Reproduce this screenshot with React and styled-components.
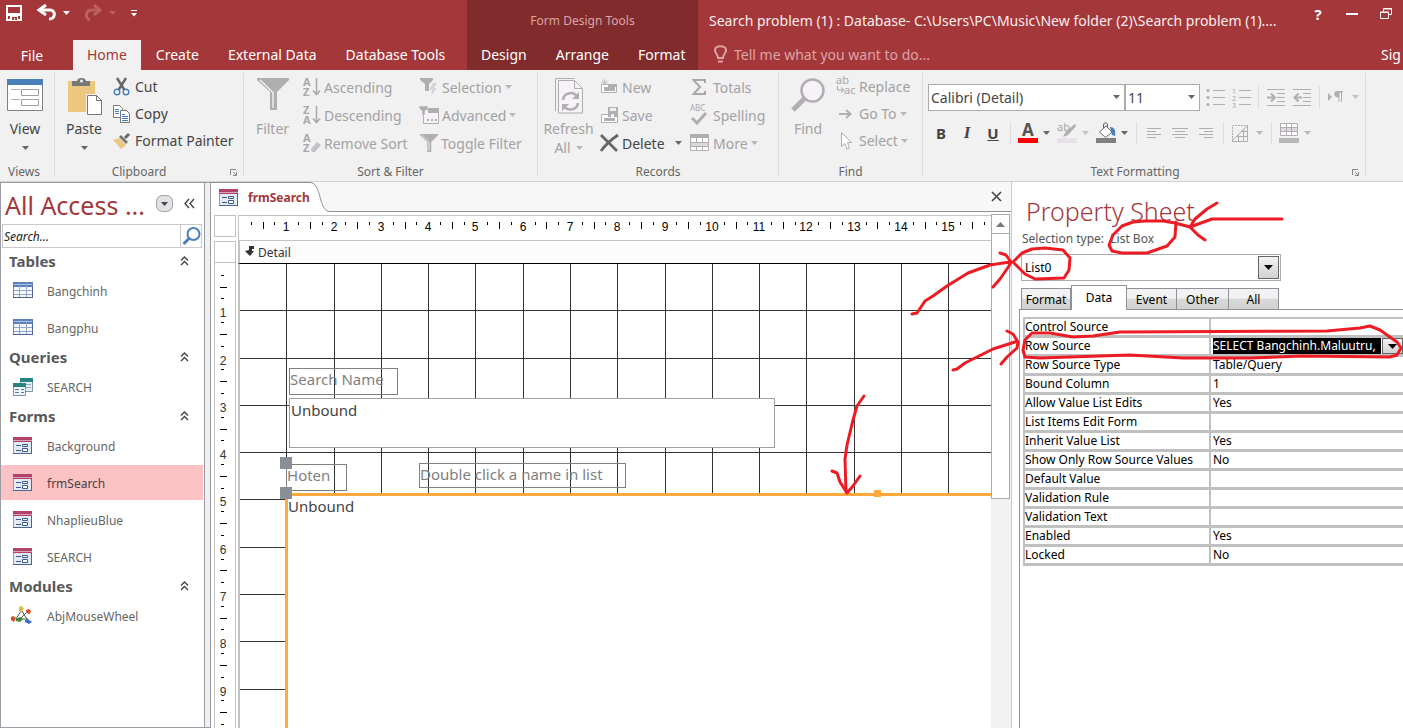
import React from 'react';
import styled, { createGlobalStyle, css } from 'styled-components';

const GlobalStyle = createGlobalStyle`
  * {
    box-sizing: border-box;
  }

  body {
    margin: 0;
    overflow: hidden;
    background: #fff;
    font-family: 'Noto Sans', 'Open Sans', sans-serif;
    font-size: 14px;
  }

  button,
  input,
  select {
    font: inherit;
    color: inherit;
    margin: 0;
    padding: 0;
    border: 0;
    border-radius: 0;
    background: none;
    outline: none;
  }

  h1,
  h2,
  ul {
    margin: 0;
    padding: 0;
    font-weight: normal;
    list-style: none;
  }
`;

const App = styled.div`
  position: relative;
  min-height: 100vh;
  display: flex;
  flex-direction: column;
  overflow: hidden;
`;

const Icon = styled.svg`
  display: block;
  flex: none;
  overflow: visible;
`;

/* ---------- title bar ---------- */

const Header = styled.header`
  display: flex;
  height: 70px;
  background: #a4373a;
  color: #fff;
`;

const HeaderPart = styled.div`
  display: flex;
  flex-direction: column;
  flex: ${(props) => (props.$grow ? '1 1 0' : `0 0 ${props.$width}px`)};
  min-width: 0;
  background: ${(props) => props.$background || 'transparent'};
`;

const TopRow = styled.div`
  display: flex;
  align-items: center;
  height: 40px;
  padding: ${(props) => props.$padding || 0};
`;

const QuickAccess = styled(TopRow)`
  height: 26px;
  margin-bottom: 14px;
  padding-left: 6px;
  gap: 15px;
`;

const QuickButton = styled.button`
  display: flex;
  align-items: center;
  gap: 6px;
`;

const ContextTitle = styled.div`
  width: 100%;
  text-align: center;
  font-size: 12px;
  color: #d9a5a7;
`;

const WindowTitle = styled.h1`
  flex: 1;
  font-size: 14px;
  white-space: nowrap;
  overflow: hidden;
  color: #fbeeee;
`;

const WindowButton = styled.button`
  display: flex;
  justify-content: center;
  align-items: center;
  width: 34px;
  height: 28px;
  margin-bottom: 12px;
`;

const Tabs = styled.nav`
  display: flex;
  height: 30px;
  gap: 1px;
`;

const Tab = styled.button`
  padding: 0 14px 2px;
  white-space: nowrap;
  background: ${(props) => (props.$active ? '#f1f1f1' : 'transparent')};
  color: ${(props) => (props.$active ? '#a4373a' : '#fff')};
`;

const FileTab = styled(Tab)`
  width: 64px;
  margin-right: 8px;
  padding: 0;
`;

const TellMe = styled.label`
  display: flex;
  align-items: center;
  flex: 1;
  gap: 7px;
  padding: 0 0 2px 16px;
`;

const TellMeInput = styled.input`
  flex: 1;

  &::placeholder {
    color: #dba4a6;
    opacity: 1;
  }
`;

const SignIn = styled.button`
  width: 22px;
  padding-bottom: 2px;
  text-align: left;
`;

/* ---------- ribbon ---------- */

const Ribbon = styled.div`
  display: flex;
  height: 112px;
  padding: 3px 0 5px;
  background: #f1f1f1;
  border-bottom: 1px solid #d2d2d2;
  color: #444;
`;

const Group = styled.section`
  display: flex;
  flex-direction: column;
  flex: 0 0 ${(props) => props.$width}px;
  border-right: 1px solid #dcdcdc;
`;

const GroupBody = styled.div`
  display: flex;
  flex: 1;
  padding-left: ${(props) => props.$left || 0}px;
`;

const GroupLabel = styled.div`
  position: relative;
  height: 18px;
  line-height: 18px;
  margin-bottom: -5px;
  padding-right: ${(props) => props.$right || 0}px;
  text-align: center;
  font-size: 12px;
  color: #666;
`;

const Launcher = styled.button`
  position: absolute;
  right: 6px;
  top: 6px;
`;

const BigButton = styled.button`
  display: flex;
  flex-direction: column;
  align-items: center;
  width: ${(props) => props.$width}px;
  padding-top: 5px;
  line-height: 20px;
  color: ${(props) => (props.$off ? '#a3a1a3' : '#444')};
`;

const BigIcon = styled.span`
  display: flex;
  height: 41px;
`;

const BigCaption = styled.span`
  display: flex;
  align-items: center;
  gap: 5px;
  height: 18px;
`;

const Column = styled.div`
  display: flex;
  flex-direction: column;
  align-items: flex-start;
  width: ${(props) => props.$width}px;
  padding-left: ${(props) => props.$left || 0}px;
`;

const SmallButton = styled.button`
  display: flex;
  align-items: center;
  gap: 3px;
  height: ${(props) => props.$height || 28}px;
  white-space: nowrap;
  color: ${(props) => (props.$off ? '#a3a1a3' : '#444')};
`;

const SplitName = styled.span`
  padding-right: 7px;
`;

const FormatArea = styled.div`
  display: flex;
  flex-direction: column;
  gap: 10px;
  padding: 11px 0 0 5px;
`;

const FormatRow = styled.div`
  display: flex;
  align-items: center;
  height: 26px;
`;

const FormatButton = styled.button`
  display: flex;
  align-items: center;
  gap: 5px;
  justify-content: ${(props) => (props.$menu ? 'flex-start' : 'center')};
  width: ${(props) => (props.$menu ? 39 : 26)}px;
  height: 26px;
  padding-left: ${(props) => (props.$menu ? 3 : 0)}px;
`;

const Letter = styled.span`
  font-weight: bold;
  font-size: 15px;
  ${(props) => props.$italic && css`
    font-style: italic;
    font-family: 'Liberation Serif', serif;
    font-size: 17px;
  `}
  ${(props) => props.$underline && css`
    text-decoration: underline;
  `}
`;

const Divider = styled.span`
  width: 1px;
  height: 22px;
  margin: 0 4px;
  background: #dcdcdc;
`;

const Combo = styled.div`
  display: flex;
  align-items: center;
  width: ${(props) => props.$width}px;
  height: 27px;
  padding: 0 4px 0 2px;
  margin-right: ${(props) => props.$after || 0}px;
  background: #fff;
  border: 1px solid #ababab;
`;

const Select = styled.select`
  appearance: none;
  flex: 1;
  min-width: 0;
`;

/* ---------- navigation pane ---------- */

const Workspace = styled.main`
  display: flex;
  flex: 1;
  min-height: 0;
`;

const NavPane = styled.aside`
  flex: 0 0 211px;
  border-right: 6px solid #f0f0f3;
  outline: 1px solid #9a9da6;
  outline-offset: -1px;
  color: #595959;
`;

const NavInner = styled.div`
  height: 100%;
  border-right: 1px solid #9a9da6;
  padding: 1px 1px 0 1px;
`;

const NavTitle = styled.div`
  display: flex;
  align-items: center;
  height: 41px;
  padding: 2px 8px 0 4px;
`;

const NavHeading = styled.h2`
  flex: 1;
  font-size: 25px;
  line-height: 40px;
  white-space: nowrap;
  color: #a4373a;
`;

const NavTitleButton = styled.button`
  margin-left: 11px;
  padding-bottom: 3px;
`;

const SearchBox = styled.div`
  display: flex;
  height: 24px;
  margin: 0 1px 3px;
  border: 1px solid #c9c9c9;
`;

const SearchInput = styled.input`
  flex: 1;
  min-width: 0;
  padding-left: 1px;
  font-size: 12px;
  font-style: italic;

  &::placeholder {
    color: #222;
    opacity: 1;
  }
`;

const SearchButton = styled.button`
  width: 21px;
  padding-left: 1px;
  border-left: 1px solid #c9c9c9;
`;

const NavGroup = styled.button`
  display: flex;
  align-items: center;
  justify-content: space-between;
  width: 100%;
  height: 22px;
  padding: 0 14px 2px 8px;
  font-size: 15px;
  font-weight: bold;
`;

const NavItem = styled.a`
  display: flex;
  align-items: center;
  gap: 13px;
  height: 35px;
  margin-bottom: 2px;
  padding: 1px 0 0 11px;
  font-size: 12px;
  text-decoration: none;
  color: ${(props) => (props.$selected ? '#444' : '#666')};
  background: ${(props) => (props.$selected ? '#fdc2c4' : 'transparent')};
`;

/* ---------- form designer ---------- */

const Document = styled.section`
  display: flex;
  flex-direction: column;
  flex: 1;
  min-width: 0;
  border-right: 1px solid #ccc;
`;

const DocTabs = styled.div`
  display: flex;
  justify-content: space-between;
  height: 30px;
  padding-right: 9px;
  background: #f7f7f7;
  border-bottom: 1px solid #8e9197;
`;

const DocTab = styled.button`
  display: flex;
  align-items: center;
  height: 30px;
  font-size: 12px;
  font-weight: bold;
  color: #a4373a;
`;

const DocTabFace = styled.span`
  display: flex;
  align-items: center;
  gap: 8px;
  height: 30px;
  padding-left: 7px;
  background: #fff;
  border-top: 1px solid #8e9197;
`;

const Designer = styled.div`
  display: flex;
  flex: 1;
  min-height: 0;
  padding-top: 2px;
`;

const DesignGrid = styled.div`
  display: grid;
  grid-template-columns: 22px 1fr;
  grid-template-rows: 26px 22px 1fr;
  flex: 1;
  min-width: 0;
  padding: 1px 0 0 3px;
  column-gap: 2px;
`;

const Corner = styled.button`
  height: 22px;
  border: 1px solid #c3c3c3;
`;

const TopRuler = styled.div`
  display: flex;
  overflow: hidden;
  border: solid #c3c3c3;
  border-width: 1px 0 1px 1px;
`;

const SectionMark = styled.button`
  border: 1px solid #c3c3c3;
`;

const SectionBar = styled.div`
  display: flex;
  align-items: center;
  gap: 3px;
  padding-left: 5px;
  font-size: 12px;
  color: #333;
  background: #fcfcfc;
  border-left: 2px solid #c3c3c3;
`;

const SideRuler = styled.div`
  display: flex;
  flex-direction: column;
  overflow: hidden;
  border: solid #c3c3c3;
  border-width: 0 1px;
`;

const RulerScale = styled.svg`
  display: block;
  flex: 1 1 0;
  min-width: 0;
  min-height: 0;
  font-family: 'Liberation Sans', Arial, sans-serif;
  font-size: 12px;
`;

const Canvas = styled.div`
  position: relative;
  overflow: hidden;
  border-left: 2px solid #c3c3c3;
  border-top: 1px solid #000;
`;

const GridLines = styled.svg`
  position: absolute;
  width: 100%;
  height: 100%;
`;

const FormControl = styled.div`
  position: absolute;
  left: ${(props) => props.$x}px;
  top: ${(props) => props.$y}px;
  width: ${(props) => props.$width}px;
  height: ${(props) => props.$height}px;
  padding-left: ${(props) => (props.$box ? 1 : 0)}px;
  border: 1px solid ${(props) => (props.$box ? '#a0a0a0' : '#808080')};
  background: ${(props) => (props.$box ? '#fff' : 'transparent')};
  color: ${(props) => (props.$box ? '#444' : '#7f7f7f')};
  font-size: 15px;
  line-height: ${(props) => (props.$box ? 22 : 20)}px;
  white-space: nowrap;
`;

const ListControl = styled.div`
  position: absolute;
  left: 45px;
  right: 0;
  top: 229px;
  bottom: 0;
  border: solid #ffa93c;
  border-width: 3px 0 0 3px;
  background: #fff;
  color: #444;
  font-size: 15px;
  line-height: 20px;
`;

const Handle = styled.span`
  position: absolute;
  left: ${(props) => props.$x}px;
  top: ${(props) => props.$y}px;
  width: ${(props) => props.$size}px;
  height: ${(props) => props.$size}px;
  background: ${(props) => props.$color};
`;

const ScrollBar = styled.div`
  display: flex;
  flex-direction: column;
  width: 20px;
  padding-right: 1px;
  background: #f2f2f2;
`;

const ScrollButton = styled.button`
  display: flex;
  align-items: center;
  justify-content: center;
  height: 20px;
  border: 1px solid #ababab;
  background: #fff;
`;

const ScrollThumb = styled.div`
  height: 265px;
  border: 1px solid #ababab;
  border-top: 0;
  background: #fff;
`;

/* ---------- property sheet ---------- */

const Sheet = styled.aside`
  flex: 0 0 391px;
  padding: 9px 0 0 7px;
  font-size: 12px;
  color: #000;
`;

const SheetTitle = styled.h2`
  padding-left: 7px;
  font-size: 25px;
  font-weight: 300;
  line-height: 40px;
  color: #a4373a;
`;

const SheetType = styled.div`
  padding-left: 3px;
  height: 23px;
  line-height: 16px;
  color: #555;
`;

const SheetCombo = styled.div`
  display: flex;
  width: 260px;
  height: 27px;
  margin-left: 2px;
  padding: 1px 1px 1px 3px;
  border: 1px solid #ababab;
`;

const DropButton = styled.button`
  display: flex;
  align-items: center;
  justify-content: center;
  width: 21px;
  border: 1px solid #666;
  background: linear-gradient(#f3f3f3, #d2d2d2);
`;

const SheetTabs = styled.div`
  display: flex;
  align-items: flex-end;
  height: 28px;
  padding-left: 2px;
`;

const SheetTab = styled.button`
  width: ${(props) => props.$width}px;
  height: ${(props) => (props.$active ? 25 : 21)}px;
  margin-bottom: ${(props) => (props.$active ? -1 : 0)}px;
  padding-bottom: ${(props) => (props.$active ? 1 : 0)}px;
  border: 1px solid #8e9197;
  border-bottom: 0;
  border-left-width: ${(props) => (props.$first || props.$active ? 1 : 0)}px;
  background: ${(props) =>
    props.$active ? '#fff' : 'linear-gradient(#f2f2f2 45%, #d9d9d9 50%, #d2d2d2)'};
`;

const SheetPage = styled.div`
  height: calc(100% - 118px);
  padding: 7px 0 0 3px;
  border: solid #8e9197;
  border-width: 1px 0 0 1px;
`;

const PropTable = styled.table`
  width: 100%;
  table-layout: fixed;
  border-spacing: 0;
  border-left: 2px solid #c0c0c0;
  border-top: 2px solid #c0c0c0;
`;

const PropName = styled.th`
  width: 186px;
  height: 19px;
  padding: 0;
  line-height: 16px;
  text-align: left;
  font-weight: normal;
  white-space: nowrap;
  border: solid #c0c0c0;
  border-width: 0 2px 3px 0;
`;

const PropValue = styled.td`
  height: 19px;
  padding: 0 0 0 2px;
  line-height: 16px;
  border-bottom: 3px solid #c0c0c0;
`;

const Editing = styled.div`
  display: flex;
  gap: 1px;
  height: 16px;
`;

const Highlighted = styled.span`
  flex: 1;
  white-space: nowrap;
  overflow: hidden;
  background: #000;
  color: #fff;
`;

const Markup = styled.svg`
  position: absolute;
  left: 0;
  top: 0;
  width: 100%;
  height: 100%;
  pointer-events: none;
`;

/* ---------- drawings ---------- */

const GRAY = '#b1aeb2';

const Arrow = ({ color = '#666' }) => (
  <Icon width='7' height='4'>
    <path d='M0 0h7L3.5 4z' fill={color} />
  </Icon>
);

const ViewIcon = () => (
  <Icon width='36' height='33'>
    <path d='M.5 1.500h35v31H.5z' fill='#fff' stroke='#808080' />
    <path d='M0 1h36v6H0z' fill='#4a80b9' />
    <path d='M4 11.500h9M4 21.500h9' stroke='#b0b0b0' />
    <path d='M14.500 11.500h17v6h-17zM14.500 21.500h17v6h-17z' fill='#fff' stroke='#a0a0a0' />
  </Icon>
);

const PasteIcon = () => (
  <Icon width='34' height='40'>
    <path d='M1 3h27v31H1z' fill='#ecc77f' />
    <path d='M5 3h5c0-4 9-4 9 0h4v5H5z' fill='#777' />
    <circle cx='14.500' cy='3' r='1.500' fill='#f1f1f1' />
    <path d='M19 16h12l5 5v17H19z' fill='#f1f1f1' />
    <path d='M20.500 17.500h9l5 5v14h-14z' fill='#fff' stroke='#777' />
    <path d='M29.500 17.500v5h5' fill='none' stroke='#777' />
  </Icon>
);

const CutIcon = () => (
  <Icon width='19' height='18'>
    <path d='M4 0l7.500 12M13 0L5.500 12' stroke='#666' strokeWidth='2.400' />
    <circle cx='4' cy='14' r='2.800' fill='none' stroke='#4a80b9' strokeWidth='1.400' />
    <circle cx='13' cy='14' r='2.800' fill='none' stroke='#4a80b9' strokeWidth='1.400' />
  </Icon>
);

const CopyIcon = () => (
  <Icon width='19' height='18'>
    <path d='M.5.5h6l3 3v9h-9z' fill='#fff' stroke='#777' />
    <path d='M2 4.500h4M2 6.500h4M2 8.500h4' stroke='#4a80b9' />
    <path d='M7.500 5.500h6l3 3v9h-9z' fill='#fff' stroke='#777' />
    <path d='M9 9.500h3M9 11.500h6M9 13.500h6M9 15.500h6' stroke='#4a80b9' />
  </Icon>
);

const PainterIcon = () => (
  <Icon width='19' height='16'>
    <path d='M0 7l6-2 7 7-5 4z' fill='#ecc77f' />
    <path d='M6 4l2-2 7 7-2 2z' fill='#777' />
    <path d='M11 4l4-4 2 2-4 4z' fill='#666' />
  </Icon>
);

const Funnel = ({ size = 32 }) => (
  <Icon width={size} height={size} viewBox='0 0 32 32'>
    <path d='M0 0h32v2L20 14v18h-7V14L0 2z' fill={GRAY} />
    <path d='M3 2l13 12.500V30' fill='none' stroke='#f1f1f1' strokeWidth='1.400' />
  </Icon>
);

const SortIcon = ({ top, bottom, erase }) => (
  <Icon width='18' height='20' fill='#a9a7aa'>
    <text x='0' y='9' fontSize='11' fontWeight='bold'>{top}</text>
    <text x='0' y='19' fontSize='11' fontWeight='bold'>{bottom}</text>
    {erase ? (
      <path d='M8 16l6-7 4 3-6 7H9z' fill='#c4c1c6' />
    ) : (
      <path d='M13.500 1v16M10 13.500l3.500 4 3.500-4' fill='none' stroke='#a9a7aa' strokeWidth='1.500' />
    )}
  </Icon>
);

const SelectionIcon = () => (
  <Icon width='19' height='18'>
    <path d='M0 0h13v2L9 6v7H5V6L0 2z' fill={GRAY} />
    <path d='M13 5h4l-3 5h3l-6 8 1-6H9z' fill='#d9d4db' />
  </Icon>
);

const AdvancedIcon = () => (
  <Icon width='19' height='18'>
    <path d='M3.500 3.500h15v14h-15z' fill='#f6f2f8' stroke={GRAY} />
    <path d='M8 2h11v5H8z' fill={GRAY} />
    <path d='M-1 0h9v2L5 5v4H2V5L-1 2z' fill={GRAY} stroke='#f1f1f1' strokeWidth='.5' />
    <path d='M7 13h2v2H7zM11 13h2v2h-2zM15 13h2v2h-2z' fill={GRAY} />
  </Icon>
);

const RefreshIcon = () => (
  <Icon width='28' height='36'>
    <path d='M.5 33V.5h19' fill='none' stroke={GRAY} />
    <path d='M3.500 2.500h16l8 8v24.500h-24z' fill='#f6f2f8' stroke={GRAY} />
    <path d='M19.500 2.500v8h8' fill='none' stroke={GRAY} />
    <path d='M8 22c1-8 11-9 14-3M23 25c-1 8-11 8-14 3' fill='none' stroke={GRAY} strokeWidth='2.500' />
    <path d='M24 14v7h-7zM7 33v-7h7z' fill={GRAY} />
  </Icon>
);

const NewIcon = () => (
  <Icon width='19' height='16'>
    <path d='M2 1l5 5M7 1L2 6M4.500 0v7M1 3.500h7' stroke='#cbc8cc' />
    <path d='M1.500 5.500h15v8h-15z' fill='#fff' stroke={GRAY} />
    <path d='M8 5h9v3H8zM4 8h11v4H4z' fill={GRAY} />
  </Icon>
);

const SaveIcon = () => (
  <Icon width='19' height='17'>
    <path d='M1.500 7.500h16v8h-16z' fill='#fff' stroke={GRAY} />
    <path d='M8 0h10v10H8zM4 11h11v3H4z' fill={GRAY} />
    <path d='M10 1h6v3h-6zM11 7h3v3h-3z' fill='#f1f1f1' />
  </Icon>
);

const DeleteIcon = () => (
  <Icon width='19' height='18'>
    <path d='M1 1l16 16M18 1C12 5 6 10 1 17' fill='none' stroke='#666' strokeWidth='2.800' />
  </Icon>
);

const TotalsIcon = () => (
  <Icon width='20' height='16'>
    <path d='M15 4V1H3.500L10 8l-6.500 7H15v-3' fill='none' stroke='#a9a7aa' strokeWidth='2' />
  </Icon>
);

const SpellingIcon = () => (
  <Icon width='20' height='20'>
    <text x='0' y='6' fontSize='8' fill='#a9a7aa'>ABC</text>
    <path d='M2 13l5 5 9-10' fill='none' stroke={GRAY} strokeWidth='3' />
  </Icon>
);

const MoreIcon = () => (
  <Icon width='20' height='18'>
    <path d='M.5.5h18v16H.5z' fill='#fff' stroke={GRAY} />
    <path d='M0 0h19v4H0z' fill={GRAY} />
    <path d='M1 8h17v4H1z' fill='#dcd8dd' />
    <path d='M6.500 4v4M12.500 4v4M6.500 12v4M12.500 12v4M1 8.500h17M1 12.500h17' stroke={GRAY} />
  </Icon>
);

const FindIcon = () => (
  <Icon width='34' height='35'>
    <path d='M2 32l12-12' stroke={GRAY} strokeWidth='5' />
    <circle cx='21.500' cy='12.500' r='11' fill='#f6f2f8' stroke={GRAY} strokeWidth='2.500' />
  </Icon>
);

const ReplaceIcon = () => (
  <Icon width='20' height='19' fill='#a9a7aa'>
    <text x='0' y='7' fontSize='11'>ab</text>
    <text x='8' y='17' fontSize='11'>ac</text>
    <path d='M1.500 9v4h6M5 10.500l3 2.500-3 2.500' fill='none' stroke='#a9a7aa' />
  </Icon>
);

const GoToIcon = () => (
  <Icon width='20' height='12'>
    <path d='M3 6h11M10 2l4.500 4-4.500 4' fill='none' stroke={GRAY} strokeWidth='2' />
  </Icon>
);

const PointerIcon = () => (
  <Icon width='20' height='18'>
    <path d='M5.500.5v14l3.500-3 2 5.500 2.500-1-2-5.500h4z' fill='#fff' stroke={GRAY} />
  </Icon>
);

const ListIcon = ({ numbered }) => (
  <Icon width='19' height='18'>
    <path d='M7 2.500h12M7 9.500h12M7 16.500h12' stroke={GRAY} />
    {[2.5, 9.5, 16.5].map((y, i) =>
      numbered ? (
        <text key={y} x='0' y={y + 3} fontSize='7' fill='#a9a7aa'>{i + 1}</text>
      ) : (
        <circle key={y} cx='2' cy={y} r='1.500' fill={GRAY} />
      )
    )}
  </Icon>
);

const IndentIcon = ({ out }) => (
  <Icon width='18' height='17'>
    <path d='M0 .5h18M10 4.500h8M10 8.500h8M10 12.500h8M0 16.500h18' stroke={GRAY} />
    <path
      d={out ? 'M9 8.500H2M5.500 4.500l-4 4 4 4' : 'M0 8.500h7M4 4.500l4 4-4 4'}
      fill='none'
      stroke={GRAY}
      strokeWidth='2'
    />
  </Icon>
);

const ParagraphIcon = () => (
  <Icon width='20' height='12'>
    <path d='M1 2l4 4-4 4z' fill={GRAY} />
    <path d='M10 0h6v1.500h-1V11h-1V1.500h-1.500V11h-1V6.500C6 6.500 6 0 10 0z' fill={GRAY} />
  </Icon>
);

const AlignIcon = ({ d }) => (
  <Icon width='16' height='12'>
    <path d={d} stroke={GRAY} />
  </Icon>
);

const FontColorIcon = () => (
  <Icon width='20' height='20'>
    <text x='4' y='13' fontSize='17' fontWeight='bold' fill='#555'>A</text>
    <path d='M0 15h20v5H0z' fill='#f00' />
  </Icon>
);

const HighlightIcon = () => (
  <Icon width='20' height='20'>
    <text x='0' y='8' fontSize='11' fill='#a9a7aa'>ab</text>
    <path d='M6 14l3-6 9-7 1 2-8 9z' fill={GRAY} />
    <path d='M0 15h20v5H0z' fill='#e9e1e9' />
  </Icon>
);

const FillIcon = () => (
  <Icon width='20' height='20'>
    <path d='M14 4c4 0 6 3 5 9l-3-1z' fill='#4a80b9' />
    <path d='M3.500 9L10 3l6 6-6.500 5.500z' fill='#fff' stroke='#666' />
    <path d='M7.500 5V2c0-3 4-3 4 0v3' fill='none' stroke='#666' />
    <path d='M0 15h20v5H0z' fill='#808080' />
  </Icon>
);

const AlternateIcon = () => (
  <Icon width='20' height='18'>
    <path d='M1.500 17V1.500H17' fill='none' stroke={GRAY} strokeDasharray='2 1' />
    <path d='M1 17L17 1M16.500 1v16.500H1M6 12.500h11M11 7.500h6M7.500 11v6M12.500 6v11' fill='none' stroke={GRAY} />
  </Icon>
);

const GridlinesIcon = () => (
  <Icon width='20' height='20'>
    <path d='M1.500.5h17v12h-17z' fill='#fff' stroke={GRAY} />
    <path d='M2 4h16v4H2z' fill='#dcd8dd' />
    <path d='M1 4.500h18M1 8.500h18M7.500 0v13M12.500 0v13' stroke={GRAY} />
    <path d='M0 15h20v5H0z' fill='#bab7bb' />
  </Icon>
);

const LauncherIcon = () => (
  <Icon width='7' height='7' fill='none' stroke='#888'>
    <path d='M.5 6V.5H6M3 3l3 3M6.500 3v3.500H3' />
  </Icon>
);

const Chevrons = () => (
  <Icon width='9' height='10' fill='none' stroke='#444' strokeWidth='1.400'>
    <path d='M1 4.500l3.500-3.500L8 4.500M1 9l3.500-3.500L8 9' />
  </Icon>
);

const TableIcon = () => (
  <Icon width='22' height='18'>
    <path d='M1.500.5h19v15h-19z' fill='#f4f7fc' stroke='#6d85b0' />
    <path d='M1 0h20v5H1z' fill='#5b7fb8' />
    <path d='M2 2.500h18' stroke='#a9c3e6' />
    <path d='M7.500 1v15M14.500 1v15M2 8.500h18M2 12.500h18' stroke='#8ea6cd' />
    <path d='M1 15.500h20M20.500 5v11' stroke='#4d668f' />
  </Icon>
);

const QueryIcon = () => (
  <Icon width='22' height='18'>
    <path d='M8.500.5h12v13h-12z' fill='#e6eff6' stroke='#7a93a8' />
    <path d='M8 0h13v4H8z' fill='#27837e' />
    <path d='M10 6.500h9M10 9.500h9' stroke='#8fa9c6' />
    <path d='M1.500 5.500h12v12h-12z' fill='#eef4fa' stroke='#7a93a8' />
    <path d='M1 5h13v4H1z' fill='#27837e' />
    <path d='M3 11.500h4M9 11.500h3M3 14.500h4M9 14.500h3' stroke='#5a79a4' />
  </Icon>
);

const FormIcon = () => (
  <Icon width='22' height='18'>
    <path d='M1.500.5h18v16h-18z' fill='#e2eaf6' stroke='#8fa0be' />
    <path d='M1 0h19v5H1z' fill='#b2416b' />
    <path d='M1 3.500h19' stroke='#d9a0b6' />
    <path d='M4 8.500h5M4 13.500h5' stroke='#3c5a8c' />
    <path d='M10.500 7.500h5v2h-5zM10.500 11.500h5v3h-5z' fill='#fff' stroke='#3c5a8c' />
    <path d='M19.500 5v12M1 16.500h19' stroke='#4d668f' />
  </Icon>
);

const ModuleIcon = () => (
  <Icon width='22' height='20'>
    <path d='M9 5l-5 8M10 5l6 10M15 6l-7 7M4 13h12' stroke='#555' />
    <path d='M7 1l2-1 3 2-2 4-3-1z' fill='#d8bf4c' />
    <path d='M14 4l3-1 2 2-1 3-4-1zM-1 11l2-1 3 2-2 4-3-2z' fill='#d3502b' />
    <path d='M4 13l4-2 3 2-3 3-4-1z' fill='#3b8a3a' />
    <path d='M13 14l3-1 4 3-3 2-4-2z' fill='#3d6fd0' />
  </Icon>
);

/* ---------- data ---------- */

const navGroups = [
  { name: 'Tables', icon: TableIcon, items: ['Bangchinh', 'Bangphu'] },
  { name: 'Queries', icon: QueryIcon, items: ['SEARCH'] },
  { name: 'Forms', icon: FormIcon, items: ['Background', 'frmSearch', 'NhaplieuBlue', 'SEARCH'] },
  { name: 'Modules', icon: ModuleIcon, items: ['AbjMouseWheel'] },
];

const properties = [
  ['Control Source', ''],
  ['Row Source', 'SELECT Bangchinh.Maluutru,'],
  ['Row Source Type', 'Table/Query'],
  ['Bound Column', '1'],
  ['Allow Value List Edits', 'Yes'],
  ['List Items Edit Form', ''],
  ['Inherit Value List', 'Yes'],
  ['Show Only Row Source Values', 'No'],
  ['Default Value', ''],
  ['Validation Rule', ''],
  ['Validation Text', ''],
  ['Enabled', 'Yes'],
  ['Locked', 'No'],
];

const sheetTabs = [
  ['Format', 50],
  ['Data', 56],
  ['Event', 50],
  ['Other', 52],
  ['All', 50],
];

const markupPaths = [
  'M912 314l5-1 8-12 8-5 14-10 21-13 22-8 20-3M1000 253l6 2 5 7-2 4-9 13-7 8',
  'M1013 262l9-9 10-4 13-1 18 2 7 8-1 12-5 8-29 1-10-5z',
  'M1190 227l-15-4-12-2h-18l-12 1-11 4-9 9-4 10 3 6 10 2h25l20-7 8-9 1-15',
  'M1282 219h-70l-22 8M1217 203l-10 6-12 10-5 8 8 8 7 5',
  'M953 370l4-1 8-6 28-14 22-7M1007 331l6 3 5 8-1 6-10 9-6 7',
  'M1025 357l-2-7 2-10 7-7h18l23 4 20-1 27-4 207-1 33-3 10-2 10 4 17 12 4 6-4 7-7 2-87-1-53 2h-67l-53-3-90 3z',
  'M864 396l-7 10-4 14-6 25-2 14 1 33M832 471l5 2 3 9 7 11 6-7 7-10',
];

// one centimetre on the ruler is 331/7 px
const cm = (n) => Math.round((n * 331) / 7);
const range = (n) => Array.from({ length: n }, (_, i) => i);

const Ruler = ({ vertical, length }) => (
  <RulerScale>
    {range(length).map((n) => (
      <React.Fragment key={n}>
        {[1, 2, 3].map((q) => {
          const at = cm(n + q / 4) + 0.5;
          const half = q === 2;
          const d = vertical
            ? `M${half ? 5 : 6} ${at}h${half ? 7 : 3}`
            : `M${at} ${half ? 6 : 6}v${half ? 7 : 3}`;
          return <path key={q} d={d} stroke='#000' />;
        })}
        {n > 0 && (
          <text
            x={vertical ? 8 : cm(n)}
            y={vertical ? cm(n) + 7 : 15}
            textAnchor='middle'
            fill={vertical ? '#333' : '#000'}
          >
            {n}
          </text>
        )}
      </React.Fragment>
    ))}
  </RulerScale>
);

const BigCommand = ({ name, caption, off, width, icon, menu }) => (
  <BigButton $width={width} $off={off}>
    <BigIcon>{icon}</BigIcon>
    <span>{name}</span>
    {menu && (
      <BigCaption>
        {caption}
        <Arrow color={off ? '#b9b7b9' : '#666'} />
      </BigCaption>
    )}
  </BigButton>
);

const Command = ({ name, icon, off, height, menu }) => (
  <SmallButton $off={off} $height={height}>
    {icon}
    {name}
    {menu && <Arrow color='#b9b7b9' />}
  </SmallButton>
);

const AccessWindow = () => (
  <App>
    <GlobalStyle />
    <Header>
      <HeaderPart $width={467}>
        <QuickAccess>
          <QuickButton aria-label='Save'>
            <Icon width='16' height='16'>
              <path d='M1 1h14v14H1z' fill='none' stroke='#fff' strokeWidth='2' />
              <path d='M1 8h14v3H1zM4 10h8v5H4z' fill='#fff' />
              <path d='M6 12h5v3H9v-2H8v2H6z' fill='#a4373a' />
            </Icon>
          </QuickButton>
          <QuickButton aria-label='Undo'>
            <Icon width='20' height='16'>
              <path d='M3 5h10c6 0 6 9-1 9' fill='none' stroke='#fff' strokeWidth='3' />
              <path d='M9 0L2 5l7 5' fill='none' stroke='#fff' strokeWidth='3' />
            </Icon>
            <Arrow color='#fff' />
          </QuickButton>
          <QuickButton aria-label='Redo'>
            <Icon width='18' height='16'>
              <path d='M14 5H7c-7 0-7 9-2 10' fill='none' stroke='#bb5f61' strokeWidth='3' />
              <path d='M9 0l6 5-6 5' fill='none' stroke='#bb5f61' strokeWidth='3' />
            </Icon>
            <Arrow color='#bb5f61' />
          </QuickButton>
          <QuickButton aria-label='Customize Quick Access Toolbar'>
            <Icon width='6' height='7'>
              <path d='M0 .5h6' stroke='#fff' />
              <path d='M0 3h6L3 6.500z' fill='#fff' />
            </Icon>
          </QuickButton>
        </QuickAccess>
        <Tabs>
          <FileTab>File</FileTab>
          <Tab $active>Home</Tab>
          <Tab>Create</Tab>
          <Tab>External Data</Tab>
          <Tab>Database Tools</Tab>
        </Tabs>
      </HeaderPart>
      <HeaderPart $width={231} $background='#822b2d'>
        <TopRow>
          <ContextTitle>Form Design Tools</ContextTitle>
        </TopRow>
        <Tabs>
          <Tab>Design</Tab>
          <Tab>Arrange</Tab>
          <Tab>Format</Tab>
        </Tabs>
      </HeaderPart>
      <HeaderPart $grow>
        <TopRow $padding='0 0 0 11px'>
          <WindowTitle>
            {'Search problem (1) : Database- C:\\Users\\PC\\Music\\New folder (2)\\Search problem (1)....'}
          </WindowTitle>
          <WindowButton aria-label='Help'>
            <Letter>?</Letter>
          </WindowButton>
          <WindowButton aria-label='Minimize'>
            <Icon width='12' height='2'>
              <path d='M0 1h12' stroke='#fff' strokeWidth='2' />
            </Icon>
          </WindowButton>
          <WindowButton aria-label='Restore'>
            <Icon width='12' height='12' fill='none' stroke='#fff'>
              <path d='M.5 4.500h8v6h-8zM0 4h9M3.500 4V.5h8v6H9M3 1h9' />
            </Icon>
          </WindowButton>
        </TopRow>
        <Tabs>
          <TellMe>
            <Icon width='13' height='18' fill='none' stroke='#dba4a6' strokeWidth='2'>
              <path d='M4 13c0-4-3-4-3-8 0-5 11-5 11 0 0 4-3 4-3 8zM4 16.500h5' />
            </Icon>
            <TellMeInput aria-label='Tell me' placeholder='Tell me what you want to do...' />
          </TellMe>
          <SignIn>Sig</SignIn>
        </Tabs>
      </HeaderPart>
    </Header>

    <Ribbon>
      <Group $width={55}>
        <GroupBody>
          <BigCommand name='View' width={50} icon={<ViewIcon />} menu />
        </GroupBody>
        <GroupLabel $right={6}>Views</GroupLabel>
      </Group>
      <Group $width={189}>
        <GroupBody $left={8}>
          <BigCommand name='Paste' width={42} icon={<PasteIcon />} menu />
          <Column $width={130} $left={8}>
            <Command name='Cut' height={27} icon={<CutIcon />} />
            <Command name='Copy' height={27} icon={<CopyIcon />} />
            <Command name='Format Painter' height={27} icon={<PainterIcon />} />
          </Column>
        </GroupBody>
        <GroupLabel $right={20}>
          Clipboard
          <Launcher aria-label='Clipboard options'>
            <LauncherIcon />
          </Launcher>
        </GroupLabel>
      </Group>
      <Group $width={294}>
        <GroupBody $left={8}>
          <BigCommand name='Filter' width={41} off icon={<Funnel />} />
          <Column $width={117} $left={10}>
            <Command name='Ascending' off icon={<SortIcon top='A' bottom='Z' />} />
            <Command name='Descending' off icon={<SortIcon top='Z' bottom='A' />} />
            <Command name='Remove Sort' off icon={<SortIcon top='A' bottom='Z' erase />} />
          </Column>
          <Column $width={120} $left={10}>
            <Command name='Selection' off menu icon={<SelectionIcon />} />
            <Command name='Advanced' off menu icon={<AdvancedIcon />} />
            <Command name='Toggle Filter' off icon={<Funnel size={18} />} />
          </Column>
        </GroupBody>
        <GroupLabel>Sort &amp; Filter</GroupLabel>
      </Group>
      <Group $width={241}>
        <GroupBody $left={4}>
          <BigCommand name='Refresh' caption='All' width={53} off menu icon={<RefreshIcon />} />
          <Column $width={95} $left={5}>
            <Command name='New' off icon={<NewIcon />} />
            <Command name='Save' off icon={<SaveIcon />} />
            <SmallButton>
              <DeleteIcon />
              <SplitName>Delete</SplitName>
              <Arrow />
            </SmallButton>
          </Column>
          <Column $width={85}>
            <Command name='Totals' off icon={<TotalsIcon />} />
            <Command name='Spelling' off icon={<SpellingIcon />} />
            <Command name='More' off menu icon={<MoreIcon />} />
          </Column>
        </GroupBody>
        <GroupLabel>Records</GroupLabel>
      </Group>
      <Group $width={144}>
        <GroupBody $left={8}>
          <BigCommand name='Find' width={42} off icon={<FindIcon />} />
          <Column $width={90} $left={7}>
            <Command name='Replace' height={27} off icon={<ReplaceIcon />} />
            <Command name='Go To' height={27} off menu icon={<GoToIcon />} />
            <Command name='Select' height={27} off menu icon={<PointerIcon />} />
          </Column>
        </GroupBody>
        <GroupLabel>Find</GroupLabel>
      </Group>
      <Group $width={443}>
        <GroupBody>
          <FormatArea>
            <FormatRow>
              <Combo $width={197}>
                <Select aria-label='Font'>
                  <option>Calibri (Detail)</option>
                </Select>
                <Arrow />
              </Combo>
              <Combo $width={75} $after={2}>
                <Select aria-label='Font Size'>
                  <option>11</option>
                </Select>
                <Arrow />
              </Combo>
              <FormatButton aria-label='Bullets'>
                <ListIcon />
              </FormatButton>
              <FormatButton aria-label='Numbering'>
                <ListIcon numbered />
              </FormatButton>
              <Divider />
              <FormatButton aria-label='Increase Indent'>
                <IndentIcon />
              </FormatButton>
              <FormatButton aria-label='Decrease Indent'>
                <IndentIcon out />
              </FormatButton>
              <Divider />
              <FormatButton $menu aria-label='Text Direction'>
                <ParagraphIcon />
                <Arrow color='#c4c1c5' />
              </FormatButton>
            </FormatRow>
            <FormatRow>
              <FormatButton aria-label='Bold'>
                <Letter>B</Letter>
              </FormatButton>
              <FormatButton aria-label='Italic'>
                <Letter $italic>I</Letter>
              </FormatButton>
              <FormatButton aria-label='Underline'>
                <Letter $underline>U</Letter>
              </FormatButton>
              <Divider />
              <FormatButton $menu aria-label='Font Color'>
                <FontColorIcon />
                <Arrow />
              </FormatButton>
              <FormatButton $menu aria-label='Highlight'>
                <HighlightIcon />
                <Arrow color='#c4c1c5' />
              </FormatButton>
              <FormatButton $menu aria-label='Background Color'>
                <FillIcon />
                <Arrow />
              </FormatButton>
              <Divider />
              <FormatButton aria-label='Align Left'>
                <AlignIcon d='M1 1.500h14M1 4.500h9M1 7.500h14M1 10.500h9' />
              </FormatButton>
              <FormatButton aria-label='Center'>
                <AlignIcon d='M0 1.500h16M3 4.500h10M0 7.500h16M3 10.500h10' />
              </FormatButton>
              <FormatButton aria-label='Align Right'>
                <AlignIcon d='M1 1.500h14M6 4.500h9M1 7.500h14M6 10.500h9' />
              </FormatButton>
              <Divider />
              <FormatButton $menu aria-label='Alternate Row Color'>
                <AlternateIcon />
                <Arrow color='#b9b7b9' />
              </FormatButton>
              <Divider />
              <FormatButton $menu aria-label='Gridlines'>
                <GridlinesIcon />
                <Arrow color='#b9b7b9' />
              </FormatButton>
            </FormatRow>
          </FormatArea>
        </GroupBody>
        <GroupLabel $right={18}>
          Text Formatting
          <Launcher aria-label='Text formatting options'>
            <LauncherIcon />
          </Launcher>
        </GroupLabel>
      </Group>
    </Ribbon>

    <Workspace>
      <NavPane>
        <NavInner>
          <NavTitle>
            <NavHeading>All Access ...</NavHeading>
            <NavTitleButton aria-label='Choose category'>
              <Icon width='17' height='17'>
                <rect x='.5' y='.5' width='16' height='16' rx='6' fill='#e0e2e4' stroke='#9a9da3' />
                <path d='M5 7h7l-3.500 4z' fill='#444' />
              </Icon>
            </NavTitleButton>
            <NavTitleButton aria-label='Collapse pane'>
              <Icon width='11' height='9' fill='none' stroke='#444' strokeWidth='1.400'>
                <path d='M5 0L1 4.500 5 9M10 0L6 4.500 10 9' />
              </Icon>
            </NavTitleButton>
          </NavTitle>
          <SearchBox>
            <SearchInput aria-label='Search' placeholder='Search...' />
            <SearchButton aria-label='Search'>
              <Icon width='19' height='18' fill='none' stroke='#4a80b9'>
                <circle cx='11.500' cy='7' r='6' strokeWidth='2' />
                <path d='M7.500 11L1.500 17' strokeWidth='3' />
              </Icon>
            </SearchButton>
          </SearchBox>
          {navGroups.map((group) => (
            <div key={group.name}>
              <NavGroup>
                {group.name}
                <Chevrons />
              </NavGroup>
              <ul>
                {group.items.map((item) => (
                  <li key={item}>
                    <NavItem href='#' $selected={item === 'frmSearch'}>
                      <group.icon />
                      {item}
                    </NavItem>
                  </li>
                ))}
              </ul>
            </div>
          ))}
        </NavInner>
      </NavPane>

      <Document>
        <DocTabs>
          <DocTab>
            <DocTabFace>
              <FormIcon />
              frmSearch
            </DocTabFace>
            <Icon width='20' height='30'>
              <path d='M0 .5c12 0 8 29 20 29v1H0z' fill='#fff' />
              <path d='M0 .5c12 0 8 29 20 29' fill='none' stroke='#8e9197' />
            </Icon>
          </DocTab>
          <button aria-label='Close form'>
            <Icon width='11' height='9'>
              <path d='M1 0l9 9M10 0L1 9' stroke='#444' strokeWidth='1.600' />
            </Icon>
          </button>
        </DocTabs>
        <Designer>
          <DesignGrid>
            <Corner aria-label='Select form' />
            <TopRuler>
              <Ruler length={16} />
            </TopRuler>
            <SectionMark aria-label='Select section' />
            <SectionBar>
              <Icon width='10' height='14'>
                <path d='M4 1h5v3H7v2h2l-4 5-5-5 4-1z' fill='#333' />
              </Icon>
              Detail
            </SectionBar>
            <SideRuler>
              <Ruler vertical length={10} />
            </SideRuler>
            <Canvas>
              <GridLines>
                {range(60).map((n) => (
                  <path
                    key={n}
                    d={`M${cm(n + 1) - 0.5} 0v2000M0 ${cm(n + 1) - 0.5}h4000`}
                    stroke='#333'
                  />
                ))}
              </GridLines>
              <FormControl $x={49} $y={104} $width={109} $height={27}>Search Name</FormControl>
              <FormControl $box $x={49} $y={134} $width={486} $height={50}>Unbound</FormControl>
              <FormControl $x={46} $y={200} $width={61} $height={27}>Hoten</FormControl>
              <FormControl $x={179} $y={199} $width={207} $height={25}>
                Double click a name in list
              </FormControl>
              <ListControl>Unbound</ListControl>
              <Handle $x={40} $y={193} $size={12} $color='#8a8f96' />
              <Handle $x={40} $y={223} $size={12} $color='#8a8f96' />
              <Handle $x={634} $y={226} $size={7} $color='#ffa93c' />
            </Canvas>
          </DesignGrid>
          <ScrollBar>
            <ScrollButton aria-label='Scroll up'>
              <Icon width='9' height='5'>
                <path d='M0 5h9L4.500 0z' fill='#777' />
              </Icon>
            </ScrollButton>
            <ScrollThumb />
          </ScrollBar>
        </Designer>
      </Document>

      <Sheet>
        <SheetTitle>Property Sheet</SheetTitle>
        <SheetType>Selection type:&nbsp; List Box</SheetType>
        <SheetCombo>
          <Select aria-label='Selected object'>
            <option>List0</option>
          </Select>
          <DropButton aria-label='Show objects'>
            <Icon width='9' height='5'>
              <path d='M0 0h9L4.500 5z' />
            </Icon>
          </DropButton>
        </SheetCombo>
        <SheetTabs>
          {sheetTabs.map(([name, width], i) => (
            <SheetTab key={name} $width={width} $first={i === 0} $active={name === 'Data'}>
              {name}
            </SheetTab>
          ))}
        </SheetTabs>
        <SheetPage>
          <PropTable>
            <tbody>
              {properties.map(([name, value]) => (
                <tr key={name}>
                  <PropName scope='row'>{name}</PropName>
                  <PropValue>
                    {name === 'Row Source' ? (
                      <Editing>
                        <Highlighted>{value}</Highlighted>
                        <DropButton aria-label='Row source choices'>
                          <Icon width='9' height='5'>
                            <path d='M0 0h9L4.500 5z' />
                          </Icon>
                        </DropButton>
                      </Editing>
                    ) : (
                      value
                    )}
                  </PropValue>
                </tr>
              ))}
            </tbody>
          </PropTable>
        </SheetPage>
      </Sheet>
    </Workspace>

    <Markup fill='none' stroke='#ed1c24' strokeWidth='3' strokeLinecap='round' strokeLinejoin='round'>
      {markupPaths.map((d) => (
        <path key={d} d={d} />
      ))}
    </Markup>
  </App>
);

export default AccessWindow;
